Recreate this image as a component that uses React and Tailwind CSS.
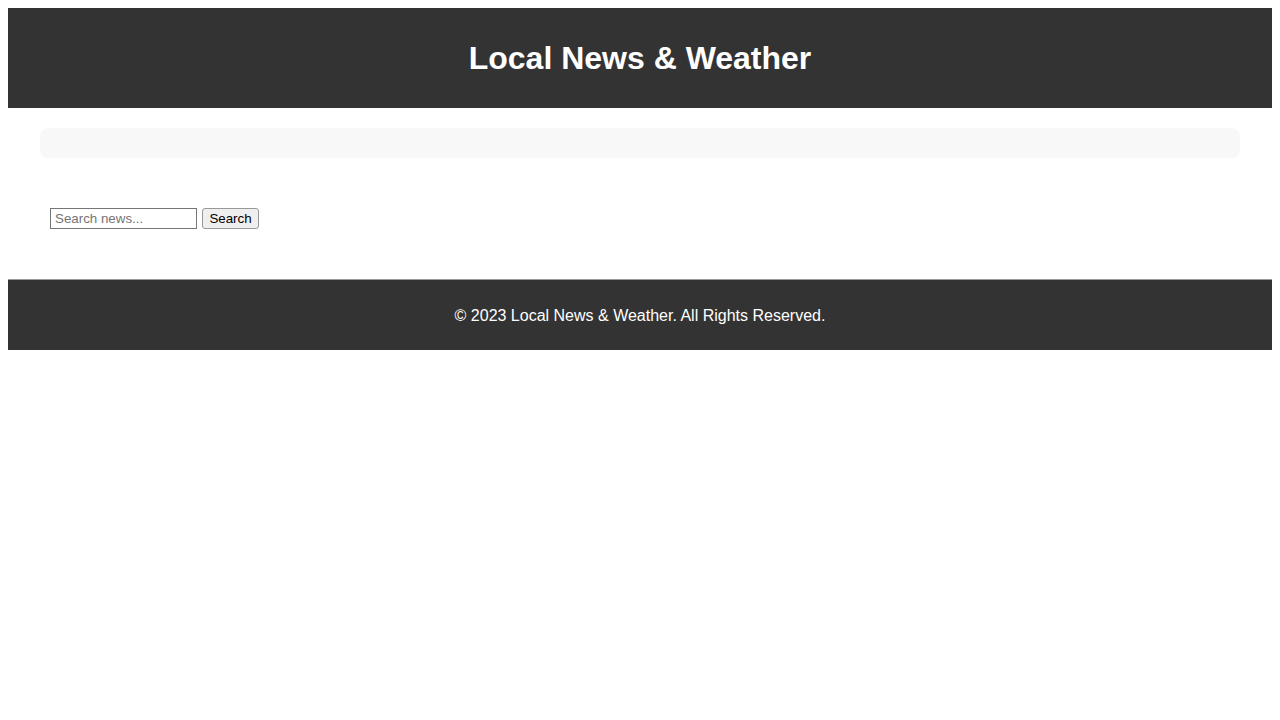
import React from 'react';

export default function App() {
  return (
    <div className="min-h-screen bg-white p-2 font-['Liberation_Sans',Arial,sans-serif]">
      <header className="h-[100px] bg-[#333333] px-[20px] pt-[30px] text-white">
        <h1 className="h-[40px] text-center text-[32px] font-bold leading-[40px]">Local News &amp; Weather</h1>
      </header>

      <main className="h-[171px] px-[22px] pt-[20px]">
        <section className="mx-[10px] h-[30px] rounded-lg bg-[#f8f8f8]" />

        <form className="mt-[50px] flex items-center gap-[5px] px-[20px]" onSubmit={(e) => e.preventDefault()}>
          <input
            type="text"
            placeholder="Search news..."
            className="h-[21px] w-[147px] border border-[#767676] px-[4px] text-[13.33px] text-black placeholder:text-[#757575] outline-none"
          />
          <button
            type="submit"
            className="h-[21px] w-[57px] rounded-[3px] border border-[#999999] bg-[#efefef] text-[13.33px] leading-[19px] text-black"
          >
            Search
          </button>
        </form>
      </main>

      <footer className="flex h-[71px] items-center justify-center border-t border-[#999999] bg-[#333333] pt-[1px] text-white">
        <p className="text-[16px]">© 2023 Local News &amp; Weather. All Rights Reserved.</p>
      </footer>
    </div>
  );
}
